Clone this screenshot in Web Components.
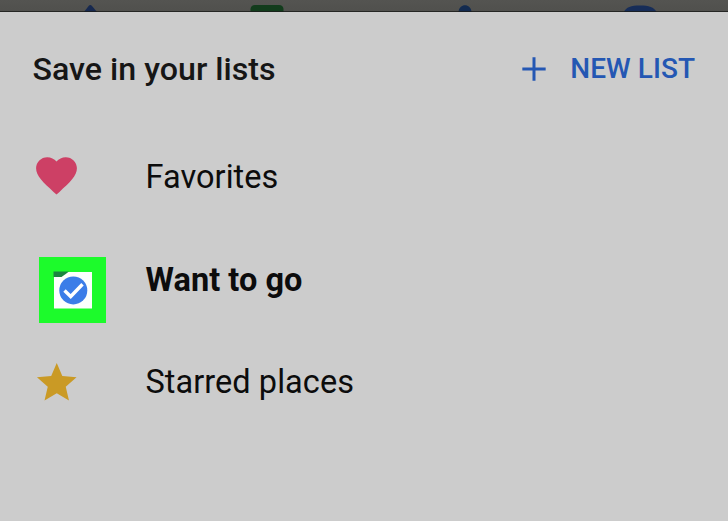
<!DOCTYPE html>
<html lang="en">
<head>
<meta charset="utf-8">
<title>Save in your lists</title>
<style>
body{
  margin:0;
  background:#ccc;
  font-family:Roboto,"Liberation Sans",sans-serif;
  color:#0c0c0c;
}
</style>
</head>
<body>
<save-sheet>
  <sheet-header slot="header" heading="Save in your lists" action="NEW LIST"></sheet-header>
  <list-row icon="heart">Favorites</list-row>
  <list-row icon="check" selected>Want to go</list-row>
  <list-row icon="star">Starred places</list-row>
</save-sheet>

<script>
// strip of the dimmed page that shows above the sheet
class PageStrip extends HTMLElement{
    constructor(){
        super()
        this.attachShadow({mode:"open"}).innerHTML=`
        <style>
        :host{display:block;height:12px;background:linear-gradient(#545451,#50504d)}
        svg{display:block}
        </style>
        <svg width="728" height="12" viewBox="0 0 728 12">
          <path fill="#17294f" d="M84 12 88.6 6Q90.3 4 92 6L97 12z"/>
          <path fill="#123c1c" d="M250.500 12V9Q251 5 255 5H279Q283 5 283.500 9V12z"/>
          <path fill="#132b50" d="M458.500 12C459 3 471 3 471.500 12z"/>
          <path fill="#172d58" d="M624 12C626 7 631 5.500 640 5.500S654 7 656.500 12z"/>
          <path fill="#1a1b1a" fill-opacity=".8" d="M0 11H728V12H0z"/>
        </svg>`
    }
}
customElements.define('page-strip',PageStrip)


// bottom sheet
class SaveSheet extends HTMLElement{
    constructor(){
        super()
        this.attachShadow({mode:"open"}).innerHTML=`
        <style>
        :host{display:block;height:521px;overflow:hidden;background:#ccc}
        .rows{display:grid;grid-auto-rows:102.5px}
        </style>
        <page-strip></page-strip>
        <slot name="header"></slot>
        <div class="rows"><slot></slot></div>`
    }
}
customElements.define('save-sheet',SaveSheet)


// title and action button
class SheetHeader extends HTMLElement{
    connectedCallback(){
        this.attachShadow({mode:"open"}).innerHTML=`
        <style>
        :host{
          display:flex;
          align-items:center;
          justify-content:space-between;
          height:113px;
          padding:0 33px 0 32.5px;
        }
        h1{margin:0;font-size:32.2px;line-height:38px;font-weight:500;color:#161616;white-space:nowrap}
        button{
          display:flex;
          align-items:center;
          gap:16.5px;
          padding:0;
          border:0;
          background:none;
          font:500 28px/34px Roboto,"Liberation Sans",sans-serif;
          letter-spacing:.05px;
          color:#2457b3;
          white-space:nowrap;
        }
        </style>
        <h1>${this.getAttribute('heading')}</h1>
        <button>
          <svg width="40" height="40" viewBox="0 0 24 24" fill="currentColor"><path d="M19 12.900h-6.100V19h-1.800v-6.100H5v-1.800h6.100V5h1.800v6.100H19z"/></svg>
          <span>${this.getAttribute('action')}</span>
        </button>`
    }
}
customElements.define('sheet-header',SheetHeader)


const icons={
    heart:`<svg style="margin:-1px 0 0 32px" width="49" height="49" viewBox="0 0 24 24" fill="#cd4065"><path d="M12 21.350l-1.450-1.320C5.400 15.360 2 12.280 2 8.500 2 5.420 4.420 3 7.500 3c1.740 0 3.410.810 4.500 2.090C13.090 3.810 14.760 3 16.500 3 19.580 3 22 5.420 22 8.500c0 3.780-3.400 6.860-8.550 11.540L12 21.350z"/></svg>`,
    check:`<svg style="margin:22.500px 0 0 39px" width="67" height="66" viewBox="0 0 67 66">
        <path fill="#1cfb2b" d="M0 0h67v66H0z"/>
        <path fill="#fcfffd" d="M15 15h38v36.500H15z"/>
        <path fill="#1a8440" d="M14.500 14.500H30L26 17.500 22.500 20H14.500z"/>
        <circle cx="34.300" cy="33.400" r="14" fill="#3b7de8"/>
        <path fill="none" stroke="#fff" stroke-width="3.400" d="M25.500 33.500l6.200 6L43.500 27.300"/>
        </svg>`,
    star:`<svg style="margin:2px 0 0 33px" width="47.500" height="47.500" viewBox="0 0 24 24" fill="#ca9a25"><path d="M12 17.270L18.180 21l-1.640-7.030L22 9.240l-7.190-.610L12 2 9.190 8.630 2 9.240l5.460 4.730L5.820 21z"/></svg>`
}

// one list with its icon
class ListRow extends HTMLElement{
    connectedCallback(){
        this.attachShadow({mode:"open"}).innerHTML=`
        <style>
        :host{
          display:grid;
          grid-template-columns:145.5px 1fr;
          align-items:center;
          font-size:32.5px;
          line-height:38px;
          letter-spacing:.05px;
          white-space:nowrap;
        }
        :host([selected]){font-weight:700}
        svg{display:block}
        span{padding-top:1.5px}
        </style>
        ${icons[this.getAttribute('icon')]}
        <span><slot></slot></span>`
    }
}
customElements.define('list-row',ListRow)
</script>
</body>
</html>
